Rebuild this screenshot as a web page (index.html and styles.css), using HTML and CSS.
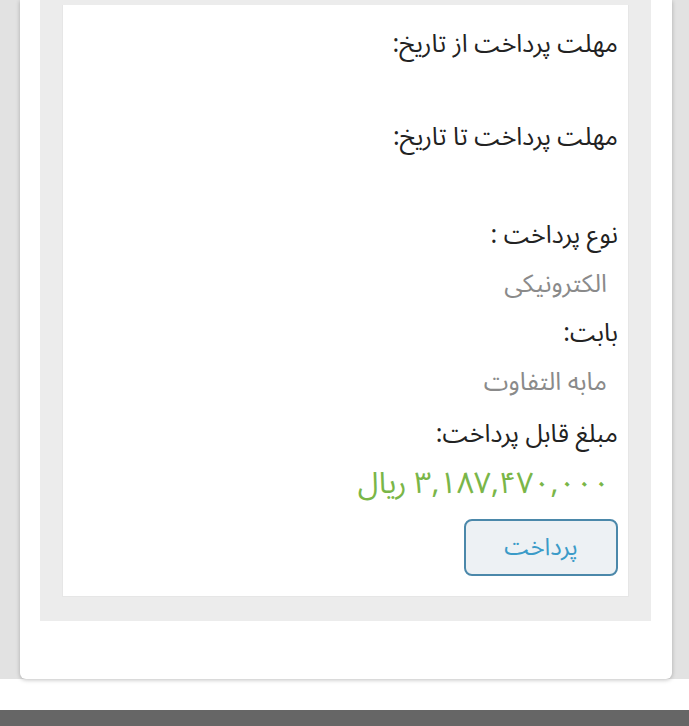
FILE: index.html
```html
<!DOCTYPE html>
<html lang="fa" dir="rtl">
<head>
  <meta charset="UTF-8">
  <meta name="viewport" content="width=device-width, initial-scale=1.0">
  <title>پرداخت</title>
  <link rel="stylesheet" href="styles.css">
</head>
<body>
  <div class="page">
    <div class="card">
      <div class="panel">
        <div class="bill">
          <p class="label">مهلت پرداخت از تاریخ:</p>
          <p class="value empty first"></p>
          <p class="label">مهلت پرداخت تا تاریخ:</p>
          <p class="value empty"></p>
          <p class="label">نوع پرداخت :</p>
          <p class="value">الکترونیکی</p>
          <p class="label">بابت:</p>
          <p class="value">مابه التفاوت</p>
          <p class="label total-label">مبلغ قابل پرداخت:</p>
          <p class="value amount">۳,۱۸۷,۴۷۰,۰۰۰ ریال</p>
          <button class="pay-button">پرداخت</button>
        </div>
      </div>
    </div>
  </div>
  <div class="spacer"></div>
  <div class="footer-bar"></div>
</body>
</html>
```

FILE: styles.css
```css
body {
  margin: 0;
  background-color: #fff;
  font-family: "Noto Sans Arabic", "DejaVu Sans", sans-serif;
}
.page {
  background-color: #e2e2e2;
  padding: 0 17px 0 20px;
}
.card {
  background-color: #fff;
  border-radius: 0 0 6px 6px;
  box-shadow: 0 1px 4px rgba(0, 0, 0, 0.25);
  padding: 0 21px 58px 20px;
}
.panel {
  background-color: #ececec;
  padding: 5px 22px 24px 22px;
}
.bill {
  background-color: #fff;
  border: 1px solid #e6e6e6;
  border-top: none;
  padding: 15px 10px 20px 10px;
  display: flex;
  flex-direction: column;
  align-items: flex-start;
}
.label {
  margin: 0;
  line-height: 49px;
  height: 49px;
  font-size: 25px;
  color: #222;
}
.total-label {
  margin-top: 3px;
}
.value {
  margin: 0;
  padding-right: 11px;
  line-height: 49px;
  height: 49px;
  font-size: 25px;
  color: #8a8a8a;
}
.value.first {
  height: 44px;
}
.amount {
  padding-right: 8px;
  font-size: 30px;
  color: #7ab648;
}
.pay-button {
  margin-top: 11px;
  width: 154px;
  height: 57px;
  background-color: #edf1f4;
  border: 2px solid #4b88aa;
  border-radius: 8px;
  font-family: inherit;
  font-size: 24px;
  color: #3b9bc8;
}
.spacer {
  height: 31px;
}
.footer-bar {
  height: 40px;
  background-color: #666;
}
```
